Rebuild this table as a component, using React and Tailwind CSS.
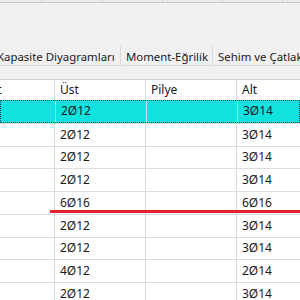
const rows = [
  { ust: '2Ø12', alt: '3Ø14' },
  { ust: '2Ø12', alt: '3Ø14' },
  { ust: '2Ø12', alt: '3Ø14' },
  { ust: '2Ø12', alt: '3Ø14' },
  { ust: '6Ø16', alt: '6Ø16' },
  { ust: '2Ø12', alt: '3Ø14' },
  { ust: '2Ø12', alt: '3Ø14' },
  { ust: '4Ø12', alt: '2Ø14' },
  { ust: '2Ø12', alt: '3Ø14' },
]

function Cell({ children, w, last }) {
  return (
    <div className={`${w} shrink-0 h-full flex items-center px-[5px] ${last ? '' : 'border-r border-[#d9d9d9]'}`}>
      {children}
    </div>
  )
}

export default function App() {
  return (
    <div
      className="relative w-[300px] h-[300px] overflow-hidden bg-[#f0f0f0] text-[12px] text-[#1a1a1a]"
      style={{ fontFamily: '"Noto Sans", "Open Sans", sans-serif' }}
    >
      {/* previous table bottom */}
      <div className="flex h-[3px] bg-[#e9e9e9] border-b border-[#c9c9c9]">
        <div className="w-[42px] shrink-0 border-r border-[#cfcfcf]" />
        <div className="w-[61px] shrink-0 border-r border-[#cfcfcf]" />
        <div className="w-[60px] shrink-0 border-r border-[#cfcfcf]" />
        <div className="w-[60px] shrink-0 border-r border-[#cfcfcf]" />
        <div className="w-[60px] shrink-0 border-r border-[#cfcfcf]" />
      </div>

      {/* tabs */}
      <div className="mt-[43px] flex h-[20px] border-b border-[#dadada] whitespace-nowrap text-[11.4px]">
        <div className="-ml-[4px] w-[125px] shrink-0 flex items-center pt-[2px] pl-[1px] border-r border-[#dadada]">
          Kapasite Diyagramları
        </div>
        <div className="w-[92px] shrink-0 flex items-center pt-[2px] pl-[5px] border-r border-[#dadada]">
          Moment-Eğrilik
        </div>
        <div className="shrink-0 flex items-center pt-[2px] pl-[5px]">Sehim ve Çatlak</div>
      </div>

      {/* table */}
      <div className="mt-[13px] bg-white border-t border-[#cfcfcf]">
        <div className="flex h-[20px] whitespace-nowrap">
          <Cell w="w-[55px]">
            <span className="-ml-[22px]">Ört</span>
          </Cell>
          <Cell w="w-[91px]">Üst</Cell>
          <Cell w="w-[91px]">Pilye</Cell>
          <Cell w="w-[80px]" last>
            Alt
          </Cell>
        </div>
        {rows.map((r, i) => (
          <div
            key={i}
            className={`flex h-[22.75px] ${
              i === 0
                ? 'bg-[#10e2df] border border-dotted border-[#3a3a3a]'
                : 'border-t border-[#dcdcdc]'
            }`}
          >
            <Cell w="w-[55px]" />
            <Cell w="w-[91px]">{r.ust}</Cell>
            <Cell w="w-[91px]" />
            <Cell w="w-[80px]" last>
              {r.alt}
            </Cell>
          </div>
        ))}
      </div>

      {/* red annotation line */}
      <div className="absolute left-[50px] top-[210px] w-[260px] h-[3px] bg-[#e3202b]" />
    </div>
  )
}
